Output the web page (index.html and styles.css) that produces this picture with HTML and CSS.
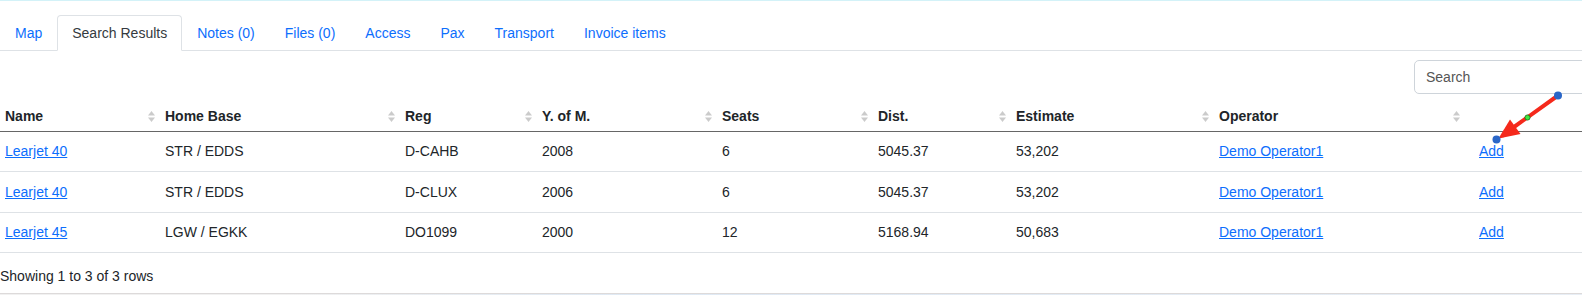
FILE: index.html
```html
<!DOCTYPE html>
<html lang="en">
<head>
<meta charset="utf-8">
<title>Search Results</title>
<link rel="stylesheet" href="styles.css">
</head>
<body>
<div class="page">
  <div class="topline"></div>
  <ul class="tabs">
    <li><a class="tab" href="#">Map</a></li>
    <li><a class="tab active" href="#">Search Results</a></li>
    <li><a class="tab" href="#">Notes (0)</a></li>
    <li><a class="tab" href="#">Files (0)</a></li>
    <li><a class="tab" href="#">Access</a></li>
    <li><a class="tab" href="#">Pax</a></li>
    <li><a class="tab" href="#">Transport</a></li>
    <li><a class="tab" href="#">Invoice items</a></li>
  </ul>
  <div class="panel">
    <div class="toolbar">
      <input class="search" type="text" placeholder="Search">
    </div>
    <table class="results">
      <colgroup>
        <col class="c-name"><col class="c-base"><col class="c-reg"><col class="c-yom"><col class="c-seats"><col class="c-dist"><col class="c-est"><col class="c-op"><col class="c-act">
      </colgroup>
      <thead>
        <tr>
          <th><div class="th-inner"><span>Name</span><svg class="sort" viewBox="0 0 7 11"><path d="M0 4.5L3.5 0L7 4.5Z"/><path d="M0 6.5H7L3.5 11Z"/></svg></div></th>
          <th><div class="th-inner"><span>Home Base</span><svg class="sort" viewBox="0 0 7 11"><path d="M0 4.5L3.5 0L7 4.5Z"/><path d="M0 6.5H7L3.5 11Z"/></svg></div></th>
          <th><div class="th-inner"><span>Reg</span><svg class="sort" viewBox="0 0 7 11"><path d="M0 4.5L3.5 0L7 4.5Z"/><path d="M0 6.5H7L3.5 11Z"/></svg></div></th>
          <th><div class="th-inner"><span>Y. of M.</span><svg class="sort" viewBox="0 0 7 11"><path d="M0 4.5L3.5 0L7 4.5Z"/><path d="M0 6.5H7L3.5 11Z"/></svg></div></th>
          <th><div class="th-inner"><span>Seats</span><svg class="sort" viewBox="0 0 7 11"><path d="M0 4.5L3.5 0L7 4.5Z"/><path d="M0 6.5H7L3.5 11Z"/></svg></div></th>
          <th><div class="th-inner"><span>Dist.</span><svg class="sort" viewBox="0 0 7 11"><path d="M0 4.5L3.5 0L7 4.5Z"/><path d="M0 6.5H7L3.5 11Z"/></svg></div></th>
          <th><div class="th-inner"><span>Estimate</span><svg class="sort" viewBox="0 0 7 11"><path d="M0 4.5L3.5 0L7 4.5Z"/><path d="M0 6.5H7L3.5 11Z"/></svg></div></th>
          <th><div class="th-inner"><span>Operator</span><svg class="sort" viewBox="0 0 7 11"><path d="M0 4.5L3.5 0L7 4.5Z"/><path d="M0 6.5H7L3.5 11Z"/></svg></div></th>
          <th><div class="th-inner"></div></th>
        </tr>
      </thead>
      <tbody>
        <tr>
          <td><a href="#">Learjet 40</a></td><td>STR / EDDS</td><td>D-CAHB</td><td>2008</td><td>6</td><td>5045.37</td><td>53,202</td><td><a href="#">Demo Operator1</a></td><td class="act"><a href="#">Add</a></td>
        </tr>
        <tr>
          <td><a href="#">Learjet 40</a></td><td>STR / EDDS</td><td>D-CLUX</td><td>2006</td><td>6</td><td>5045.37</td><td>53,202</td><td><a href="#">Demo Operator1</a></td><td class="act"><a href="#">Add</a></td>
        </tr>
        <tr>
          <td><a href="#">Learjet 45</a></td><td>LGW / EGKK</td><td>DO1099</td><td>2000</td><td>12</td><td>5168.94</td><td>50,683</td><td><a href="#">Demo Operator1</a></td><td class="act"><a href="#">Add</a></td>
        </tr>
      </tbody>
    </table>
    <div class="pagination-info">Showing 1 to 3 of 3 rows</div>
  </div>
  <div class="bottom-strip"></div>
  <svg class="annotation" viewBox="0 0 1582 295" width="1582" height="295">
    <line x1="1558" y1="95.5" x2="1514" y2="127" stroke="#f5291b" stroke-width="4" stroke-linecap="round"/>
    <polygon points="1498.5,138.5 1510,119.4 1520.5,134" fill="#f5291b"/>
    <circle cx="1558" cy="95.5" r="4" fill="#2a66c8"/>
    <circle cx="1496.5" cy="139.5" r="4" fill="#2a66c8"/>
    <circle cx="1527.5" cy="117.5" r="2.6" fill="#3de83d" stroke="#1d6b1d" stroke-width="0.8"/>
  </svg>
</div>
</body>
</html>
```

FILE: styles.css
```css
* {
  box-sizing: border-box;
}

html, body {
  margin: 0;
  padding: 0;
  overflow: hidden;
  background: #fff;
}

body {
  font-family: "Liberation Sans", Arial, sans-serif;
  font-size: 14px;
  line-height: 21px;
  color: #212529;
}

.page {
  position: relative;
  width: 1582px;
  height: 295px;
}

.topline {
  height: 1px;
  background: #d3f2f8;
}

.tabs {
  list-style: none;
  margin: 0;
  padding: 14px 0 0 0;
  display: flex;
  border-bottom: 1px solid #dee2e6;
}

.tabs li {
  margin-bottom: -1px;
}

.tab {
  display: block;
  padding: 7px 14px;
  line-height: 20px;
  border: 1px solid transparent;
  border-top-left-radius: 4px;
  border-top-right-radius: 4px;
  color: #0d6efd;
  text-decoration: none;
}

.tab.active {
  color: #343a40;
  background: #fff;
  border-color: #dee2e6 #dee2e6 #fff;
}

.toolbar {
  display: flex;
  justify-content: flex-end;
  padding: 9px 0 7px;
}

.search {
  width: 200px;
  height: 34px;
  margin-right: -32px;
  padding: 0 11px;
  border: 1px solid #ced4da;
  border-radius: 5px;
  font-family: inherit;
  font-size: 14px;
  color: #495057;
  background: #fff;
  outline: none;
}

.search::placeholder {
  color: #555;
}

.results {
  width: 1582px;
  table-layout: fixed;
  border-collapse: collapse;
}

.c-name { width: 160px; }
.c-base { width: 240px; }
.c-reg { width: 137px; }
.c-yom { width: 180px; }
.c-seats { width: 156px; }
.c-dist { width: 138px; }
.c-est { width: 203px; }
.c-op { width: 251px; }
.c-act { width: 117px; }

.results th {
  padding: 0;
  text-align: left;
  font-weight: bold;
  border-bottom: 1px solid #666;
}

.th-inner {
  display: flex;
  align-items: center;
  justify-content: space-between;
  padding: 4.5px 5px;
  height: 30px;
}

.sort {
  width: 7px;
  height: 11px;
  fill: #cbcbcb;
  flex: none;
}

.results td {
  padding: 9.2px 5px;
  border-bottom: 1px solid #dee2e6;
  white-space: nowrap;
}

.results td.act {
  padding-left: 14px;
}

.results a {
  color: #0d6efd;
  text-decoration: underline;
}

.pagination-info {
  padding: 13px 0 6px;
  border-bottom: 1px solid #dddada;
}

.bottom-strip {
  height: 2px;
  background: linear-gradient(to right, #f1f1f1 0%, #f1f1f1 18%, #dfe9f4 40%, #e8eef5 100%);
}

.annotation {
  position: absolute;
  top: 0;
  left: 0;
  pointer-events: none;
}
```
